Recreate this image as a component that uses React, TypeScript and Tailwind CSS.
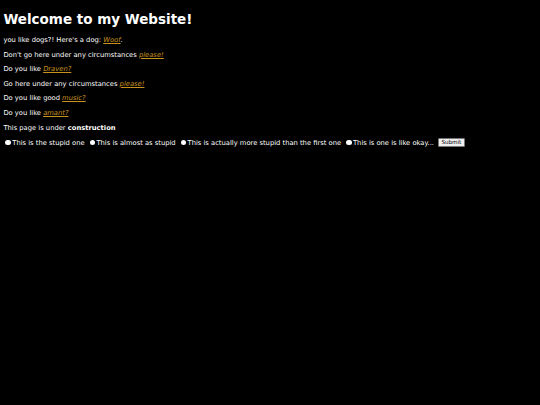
export default function App() {
  const lines: { pre: string; link?: string; post?: string; bold?: string }[] = [
    { pre: "you like dogs?! Here's a dog: ", link: 'Woof', post: '.' },
    { pre: "Don't go here under any circumstances ", link: 'please!' },
    { pre: 'Do you like ', link: 'Draven?' },
    { pre: 'Go here under any circumstances ', link: 'please!' },
    { pre: 'Do you like good ', link: 'music?' },
    { pre: 'Do you like ', link: 'amant?' },
    { pre: 'This page is under ', bold: 'construction' },
  ];
  const options = [
    'This is the stupid one',
    'This is almost as stupid',
    'This is actually more stupid than the first one',
    'This is one is like okay...',
  ];

  return (
    <div
      className="min-h-[405px] bg-black text-white px-[3.4px] pt-[3.4px]"
      style={{ fontFamily: '"DejaVu Sans", Verdana, sans-serif' }}
    >
      <h1 className="mt-[9px] text-[13.5px] font-bold leading-[15.7px] whitespace-nowrap">
        Welcome to my Website!
      </h1>
      <div className="mt-[8px] flex flex-col gap-[6.6px] text-[6.75px] leading-[8px] whitespace-nowrap">
        {lines.map((l, i) => (
          <p key={i}>
            {l.pre}
            {l.link && <a className="italic underline text-[#c8921e]">{l.link}</a>}
            {l.post}
            {l.bold && <b>{l.bold}</b>}
          </p>
        ))}
        <form className="flex items-center">
          {options.map((o) => (
            <label key={o} className="flex items-center mr-[3px]">
              <span className="ml-[2.1px] mr-[1.3px] w-[5.5px] h-[5.5px] rounded-full bg-white" />
              {o}
            </label>
          ))}
          <button
            type="button"
            className="ml-px px-[2.5px] h-[8.5px] text-[5.6px] leading-[6.5px] text-black bg-[#efefef] border border-[#767676] rounded-[1px]"
          >
            Submit
          </button>
        </form>
      </div>
    </div>
  );
}
